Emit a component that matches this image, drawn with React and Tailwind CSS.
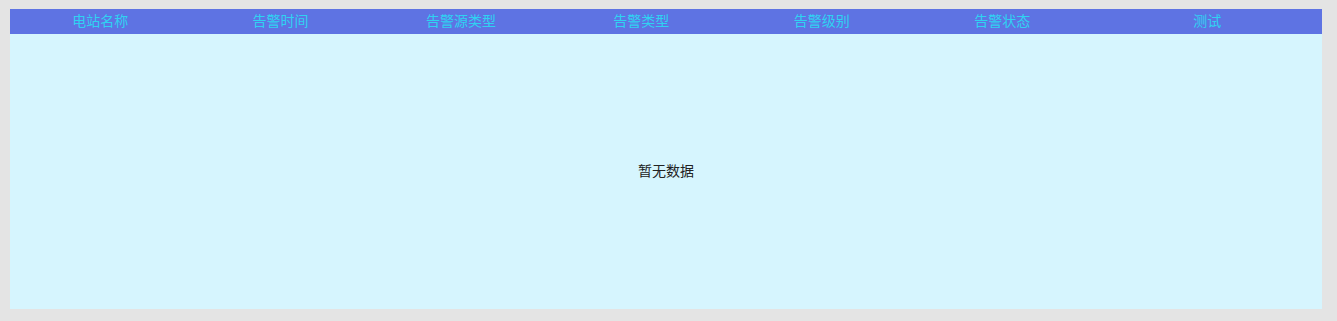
import React from 'react';

const columns = ['电站名称', '告警时间', '告警源类型', '告警类型', '告警级别', '告警状态', '测试'];

const App = () => {
  return (
    <div
      className="h-[321px] w-full bg-[#e4e4e4] pt-[9px] pb-[12px] pl-[10px] pr-[15px]"
      style={{ fontFamily: '"Liberation Sans", "Noto Sans CJK SC", sans-serif' }}
    >
      <div className="flex h-[300px] flex-col bg-[#d6f5fe]">
        <div className="flex h-[25px] items-center bg-[#5e73e3] text-[14px] text-[#2fd2f2]">
          {columns.map((c, i) => (
            <div
              key={c}
              className={i === columns.length - 1 ? 'flex-1 text-center' : 'w-[13.75%] text-center'}
            >
              {c}
            </div>
          ))}
        </div>
        <div className="flex flex-1 items-center justify-center text-[14px] text-[#222]">
          暂无数据
        </div>
      </div>
    </div>
  );
};

export default App;
